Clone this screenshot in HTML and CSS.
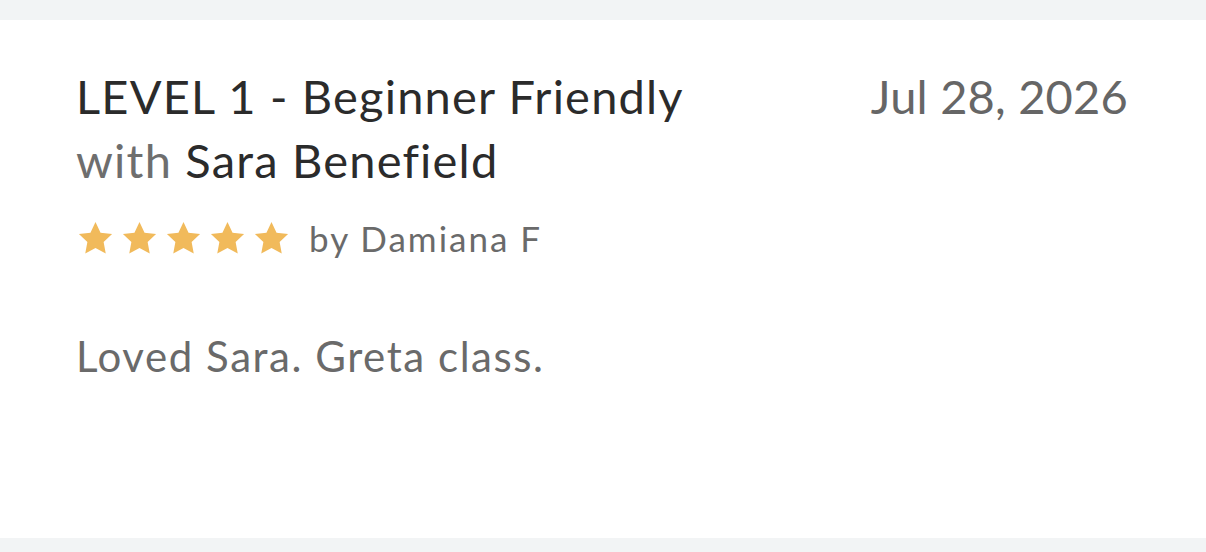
FILE: index.html
```html
<!DOCTYPE html>
<html>
<head>
<meta charset="utf-8">
<link rel="stylesheet" href="styles.css">
</head>
<body>
<div class="card">
  <div class="head">
    <div class="title">
      <div class="class-name">LEVEL 1 - Beginner Friendly</div>
      <div class="teacher"><span class="with">with</span> Sara Benefield</div>
    </div>
    <div class="date">Jul 28, 2026</div>
  </div>
  <div class="rating">
    <div class="stars">
      <svg class="star" viewBox="0 0 24 24"><path d="M12 1.8l3.1 6.6 7.1.9-5.2 4.9 1.3 7.1L12 17.8l-6.3 3.5 1.3-7.1L1.8 9.3l7.1-.9z"/></svg>
      <svg class="star" viewBox="0 0 24 24"><path d="M12 1.8l3.1 6.6 7.1.9-5.2 4.9 1.3 7.1L12 17.8l-6.3 3.5 1.3-7.1L1.8 9.3l7.1-.9z"/></svg>
      <svg class="star" viewBox="0 0 24 24"><path d="M12 1.8l3.1 6.6 7.1.9-5.2 4.9 1.3 7.1L12 17.8l-6.3 3.5 1.3-7.1L1.8 9.3l7.1-.9z"/></svg>
      <svg class="star" viewBox="0 0 24 24"><path d="M12 1.8l3.1 6.6 7.1.9-5.2 4.9 1.3 7.1L12 17.8l-6.3 3.5 1.3-7.1L1.8 9.3l7.1-.9z"/></svg>
      <svg class="star" viewBox="0 0 24 24"><path d="M12 1.8l3.1 6.6 7.1.9-5.2 4.9 1.3 7.1L12 17.8l-6.3 3.5 1.3-7.1L1.8 9.3l7.1-.9z"/></svg>
    </div>
    <div class="author">by Damiana F</div>
  </div>
  <p class="review">Loved Sara. Greta class.</p>
</div>
</body>
</html>
```

FILE: styles.css
```css
html, body {
  margin: 0;
  padding: 0;
}
body {
  background: #f2f4f5;
  font-family: Lato, "Liberation Sans", sans-serif;
  padding: 20px 0 14px;
}
.card {
  background: #ffffff;
  height: 518px;
  box-sizing: border-box;
  padding: 44px 78px 0 76px;
}
.head {
  display: flex;
  justify-content: space-between;
  align-items: flex-start;
}
.class-name, .teacher {
  font-size: 47px;
  line-height: 64px;
  color: #2b2b2b;
  letter-spacing: 1.2px;
}
.with {
  color: #6e6e6e;
}
.date {
  font-size: 47px;
  line-height: 64px;
  color: #666666;
  letter-spacing: 0.2px;
}
.rating {
  display: flex;
  align-items: center;
  gap: 18px;
  margin-top: 22px;
  height: 48px;
}
.stars {
  display: flex;
  gap: 5px;
}
.star {
  width: 39px;
  height: 39px;
  fill: #f1ba5b;
}
.author {
  font-size: 35px;
  color: #6a6a6a;
  letter-spacing: 2px;
}
.review {
  margin: 66px 0 0;
  font-size: 42px;
  line-height: 56px;
  color: #6a6a6a;
  letter-spacing: 1.55px;
}
```
